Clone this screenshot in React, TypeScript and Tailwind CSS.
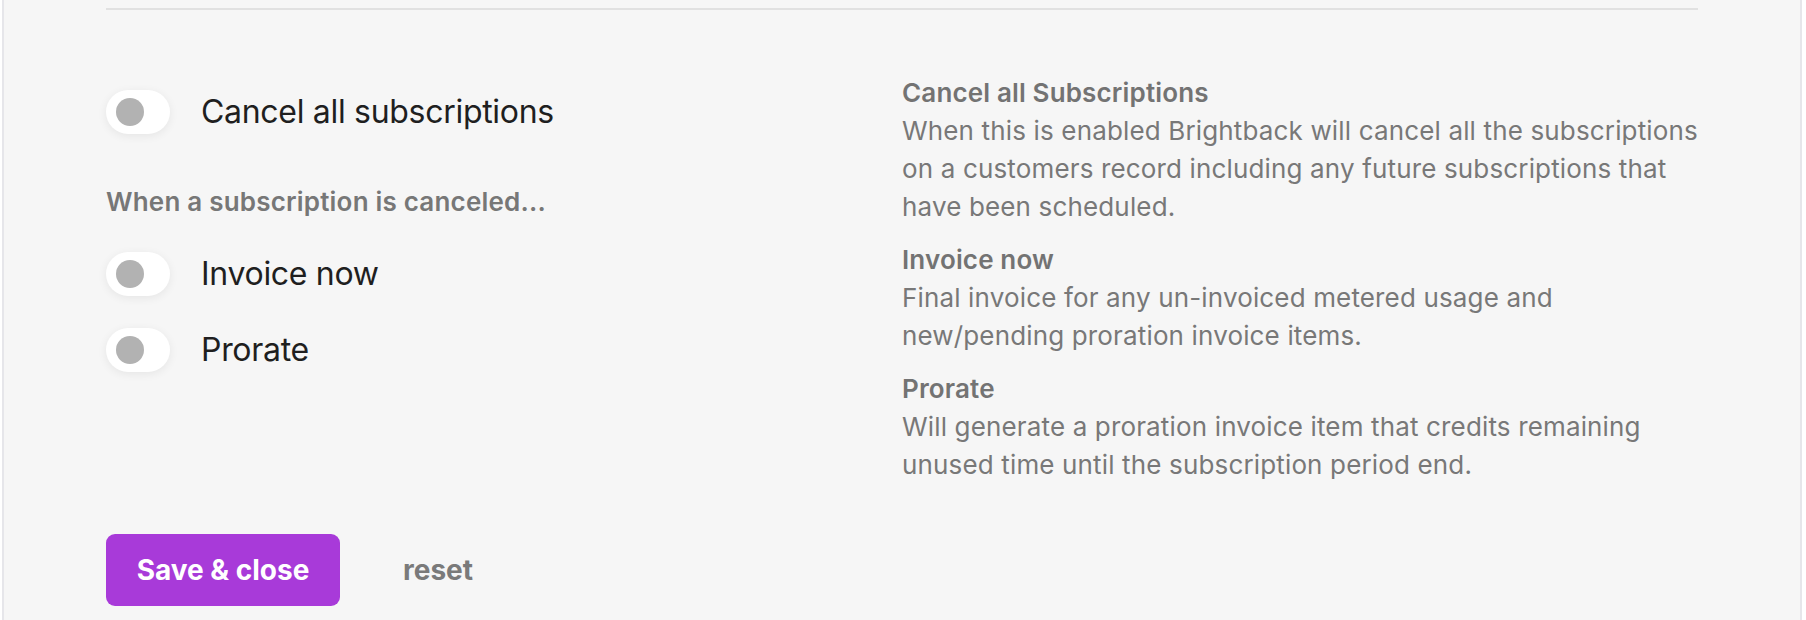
import React from 'react';

interface ToggleRowProps {
  label: string;
}

const Toggle: React.FC = () => {
  return (
    <div className="flex h-[44px] w-[64px] shrink-0 items-center rounded-full bg-white pl-[10px] shadow-[0_2px_10px_rgba(0,0,0,0.07)]">
      <div className="h-[28px] w-[28px] rounded-full bg-[#b2b2b2]" />
    </div>
  );
};

const ToggleRow: React.FC<ToggleRowProps> = ({ label }) => {
  return (
    <div className="flex items-center gap-[31px]">
      <Toggle />
      <span className="text-[32px] leading-[44px] tracking-[-0.3px] text-[#1f1f1f]">{label}</span>
    </div>
  );
};

interface HelpBlockProps {
  title: string;
  lines: string[];
}

const HelpBlock: React.FC<HelpBlockProps> = ({ title, lines }) => {
  return (
    <div className="text-[26px] leading-[38px] tracking-[0.15px] text-[#787878]">
      <h3 className="font-semibold text-[#737373]">{title}</h3>
      {lines.map((line) => (
        <p key={line} className="whitespace-nowrap">
          {line}
        </p>
      ))}
    </div>
  );
};

export default function App() {
  return (
    <div className="min-h-screen bg-white font-['Inter',sans-serif]">
      <div className="ml-[2px] min-h-screen w-[1800px] border-x-2 border-[#e6e6ea] bg-[#f6f6f6] px-[102px] pt-[8px]">
        <div className="border-t-2 border-[#e1e1e1]" />

        <div className="mt-[64px] grid grid-cols-2">
          {/* left: switches */}
          <div className="flex flex-col pt-[16px]">
            <ToggleRow label="Cancel all subscriptions" />
            <p className="mt-[50px] text-[26px] font-semibold leading-[36px] tracking-[0.2px] text-[#777777]">
              When a subscription is canceled...
            </p>
            <div className="mt-[32px] flex flex-col gap-[32px]">
              <ToggleRow label="Invoice now" />
              <ToggleRow label="Prorate" />
            </div>
          </div>

          {/* right: help text */}
          <div className="flex flex-col gap-[15px]">
            <HelpBlock
              title="Cancel all Subscriptions"
              lines={[
                'When this is enabled Brightback will cancel all the subscriptions',
                'on a customers record including any future subscriptions that',
                'have been scheduled.',
              ]}
            />
            <HelpBlock
              title="Invoice now"
              lines={[
                'Final invoice for any un-invoiced metered usage and',
                'new/pending proration invoice items.',
              ]}
            />
            <HelpBlock
              title="Prorate"
              lines={[
                'Will generate a proration invoice item that credits remaining',
                'unused time until the subscription period end.',
              ]}
            />
          </div>
        </div>

        <div className="mt-[50px] flex items-center gap-[63px]">
          <button className="h-[72px] w-[234px] rounded-[9px] bg-[#a83ad9] text-[28px] font-bold text-white">
            Save &amp; close
          </button>
          <button className="text-[28px] font-bold text-[#7a7a7a]">reset</button>
        </div>
      </div>
    </div>
  );
}
